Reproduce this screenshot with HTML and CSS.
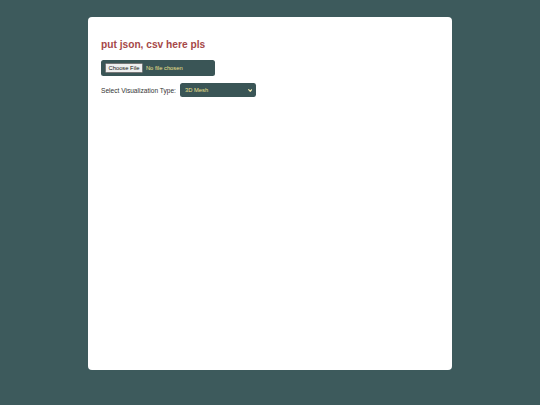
FILE: index.html
```html
<!DOCTYPE html>
<html lang="en">
<head>
<meta charset="utf-8">
<title>Visualizer</title>
<link rel="stylesheet" href="styles.css">
</head>
<body>
<main class="card">
  <h2 class="title">put json, csv here pls</h2>
  <input class="file-input" type="file" accept=".json,.csv">
  <div class="viz-row">
    <label class="viz-label" for="vizType">Select Visualization Type:</label>
    <span class="select-wrap">
      <select class="viz-select" id="vizType">
        <option>3D Mesh</option>
        <option>Scatter Plot</option>
        <option>Bar Chart</option>
      </select>
      <svg class="select-arrow" viewBox="0 0 10 7" width="4.5" height="3.2" aria-hidden="true">
        <path d="M1.5 1.5 L5 5 L8.5 1.5" fill="none" stroke="currentColor" stroke-width="2.6" stroke-linecap="round" stroke-linejoin="round"/>
      </svg>
    </span>
  </div>
</main>
</body>
</html>
```

FILE: styles.css
```css
html, body {
  margin: 0;
  padding: 0;
}

body {
  background: #3d5a5c;
  font-family: "Liberation Sans", Arial, sans-serif;
  padding-top: 17px;
  height: 405px;
  box-sizing: border-box;
}

.card {
  display: block;
  width: 364px;
  height: 353px;
  box-sizing: border-box;
  margin: 0 auto;
  padding: 12.7px 13px;
  background: #ffffff;
  border-radius: 4px;
}

.title {
  margin: 9px 0 9px;
  font-size: 10.2px;
  font-weight: bold;
  line-height: 12px;
  color: #a64848;
}

.file-input {
  display: block;
  width: 114px;
  height: 16px;
  box-sizing: border-box;
  padding: 3px 4px;
  margin: 0;
  background: #3a5556;
  border: none;
  border-radius: 2.5px;
  color: #eee08a;
  font-family: "Liberation Sans", Arial, sans-serif;
  font-size: 5.8px;
  line-height: 10px;
}

.file-input::file-selector-button {
  height: 10px;
  padding: 0 2.5px;
  margin: 0 3px 0 0;
  background: #efefef;
  border: 0.5px solid #767676;
  border-radius: 1.5px;
  color: #111;
  font-family: "Liberation Sans", Arial, sans-serif;
  font-size: 5.8px;
  line-height: 9px;
}

.viz-row {
  display: flex;
  align-items: center;
  gap: 3px;
  margin-top: 7.5px;
}

.viz-label {
  font-size: 6.6px;
  color: #333;
}

.select-wrap {
  position: relative;
  display: inline-flex;
  margin-left: 1px;
}

.viz-select {
  -webkit-appearance: none;
  appearance: none;
  width: 76px;
  height: 14px;
  box-sizing: border-box;
  padding: 0 8px 0 5px;
  margin: 0;
  background-color: #3a5556;
  border: none;
  border-radius: 2.5px;
  color: #eee08a;
  font-family: "Liberation Sans", Arial, sans-serif;
  font-size: 5.8px;
}

.select-arrow {
  position: absolute;
  right: 3.5px;
  top: 5.4px;
  color: #f2eab0;
  pointer-events: none;
}
```
